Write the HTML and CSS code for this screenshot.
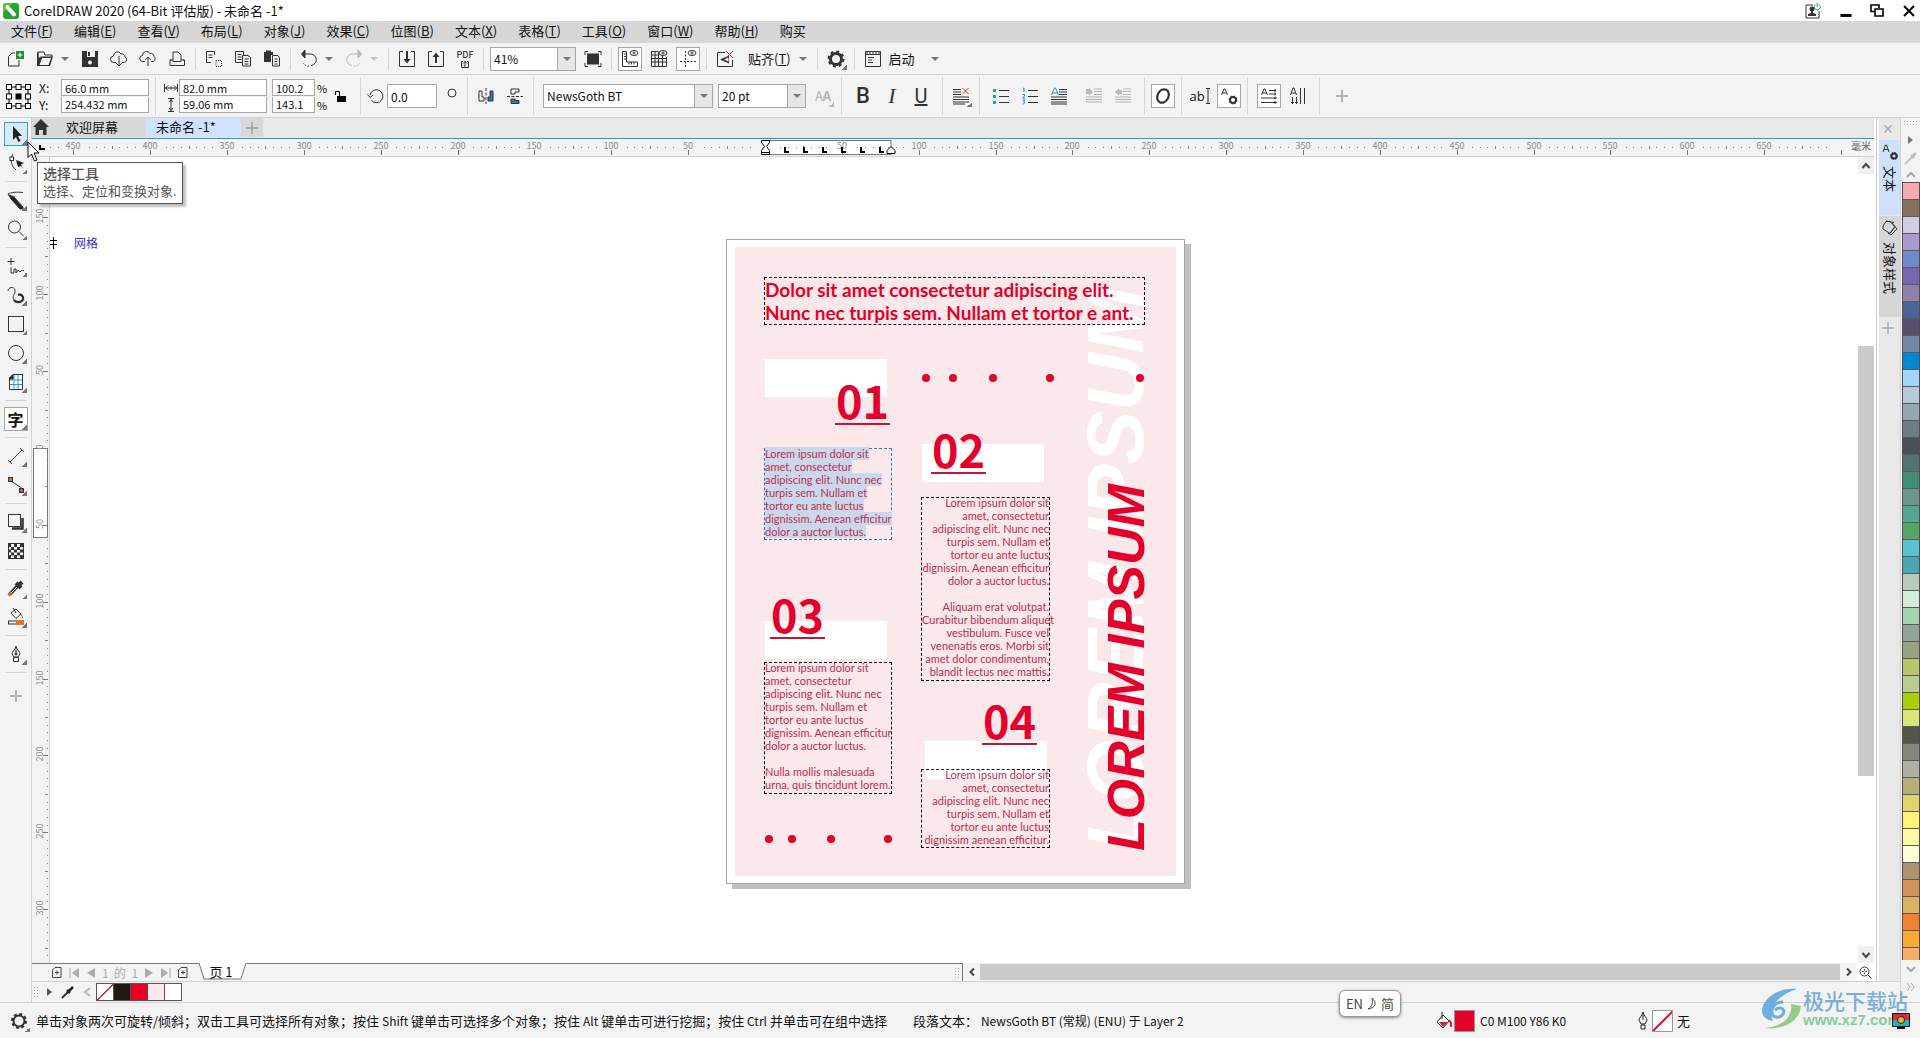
FILE: index.html
```html
<!DOCTYPE html>
<html lang="zh-CN">
<head>
<meta charset="utf-8">
<title>CorelDRAW 2020 (64-Bit 评估版) - 未命名 -1*</title>
<link rel="stylesheet" href="styles.css">
</head>
<body>
<header class="titlebar">
  <svg class="app-logo" width="16" height="16" viewBox="0 0 16 16"><rect width="16" height="16" rx="3" fill="#24a52c"/><path d="M0 10V3a3 3 0 0 1 3-3h7z" fill="#56c235"/><path d="M3 2.500l2-.5 8 8.500-.5 2.500-2.500.500-7.500-8.500z" fill="#fff"/></svg>
  <h1 class="app-title">CorelDRAW 2020 (64-Bit 评估版) - 未命名 -1*</h1>
  <div class="window-controls">
    <button class="win" aria-label="登录"><svg width="18" height="18" viewBox="0 0 18 18"><path d="M9 3H2v13h13V9" stroke="#333" fill="none"/><circle cx="8" cy="7" r="2.500" fill="#333"/><path d="M7 8h2v3l3 1v2H4v-2l3-1z" fill="#333"/><path d="M11.500 2.500a3 3 0 1 0 3.500 0M13.200 1v4" stroke="#2a9d4e" fill="none"/></svg></button>
    <button class="win" aria-label="最小化"><svg width="12" height="16" viewBox="0 0 12 16"><path d="M.5 12.500h11" stroke="#000" stroke-width="3"/></svg></button>
    <button class="win" aria-label="还原"><svg width="14" height="16" viewBox="0 0 14 16"><path d="M4.500 8.500H1V2h8v3M5 6h8v7H5z" fill="none" stroke="#000" stroke-width="1.600"/></svg></button>
    <button class="win" aria-label="关闭"><svg width="14" height="16" viewBox="0 0 14 16"><path d="M2 3l10 10M12 3L2 13" stroke="#000" stroke-width="2"/></svg></button>
  </div>
</header>

<nav class="menubar">
  <button>文件(<u>F</u>)</button><button>编辑(<u>E</u>)</button><button>查看(<u>V</u>)</button><button>布局(<u>L</u>)</button><button>对象(<u>J</u>)</button><button>效果(<u>C</u>)</button><button>位图(<u>B</u>)</button><button>文本(<u>X</u>)</button><button>表格(<u>T</u>)</button><button>工具(<u>O</u>)</button><button>窗口(<u>W</u>)</button><button>帮助(<u>H</u>)</button><button>购买</button>
</nav>

<div class="bar standard-bar">
  <button class="tool" aria-label="新建"><svg viewBox="0 0 24 24"><path d="M11 6H8L4.500 9.500V19H15v-6"/><rect x="12" y="4" width="8" height="8" fill="#1f8a3b" stroke="none"/><path d="M16 5.500v5M13.500 8h5" stroke="#fff"/></svg></button>
  <span class="split"><button class="tool" aria-label="打开"><svg viewBox="0 0 24 24"><path d="M5 18V5h6l1 3h7v2"/><path d="M4 19V5.500h1.500V11L8 9.500h12L17 19z" fill="#333" stroke="none"/><path d="M9 11h9l-2.500 7H6.500z" fill="#f3f3f3" stroke="none"/></svg></button><button class="drop" aria-label="最近文件"></button></span>
  <button class="tool" aria-label="保存"><svg viewBox="0 0 24 24"><path d="M4 4h16v16H4V6z" fill="#333" stroke="none"/><path d="M9 4h8v6H9z" fill="#f3f3f3" stroke="none"/><path d="M11 5v4" stroke-width="2"/><circle cx="12" cy="15.500" r="2" fill="#f3f3f3" stroke="none"/></svg></button>
  <button class="tool" aria-label="从云中打开"><svg viewBox="0 0 24 24"><path d="M9 15.500H7a3 3 0 0 1-.5-6.500 4 4 0 0 1 7.500-2 3 3 0 0 1 4 3 3 3 0 0 1-.5 5.500H15M12 9v9M9 16l3 3 3-3"/></svg></button>
  <button class="tool" aria-label="保存到云"><svg viewBox="0 0 24 24"><path d="M9 14.500H7a3 3 0 0 1-.5-6 4 4 0 0 1 7.500-2 3 3 0 0 1 4 3 3 3 0 0 1-.5 5H15M12 19v-8M9 13l3-3 3 3"/></svg></button>
  <button class="tool" aria-label="打印"><svg viewBox="0 0 24 24"><path d="M8 13V5h5l3 3v5M6.500 13H5v5.500h14.500V13H18M5 13h3v1.500h8V13h3"/></svg></button>
  <i class="sep"></i>
  <button class="tool" aria-label="剪切"><svg viewBox="0 0 24 24"><path d="M12.500 8V4.500H4.500v11H9M6.500 8h4M6.500 10.500h4"/><path d="M14 13.500h5.500v6H14z" stroke-dasharray="1 1"/></svg></button>
  <button class="tool" aria-label="复制"><svg viewBox="0 0 24 24"><path d="M11 15.500H4.500v-11h8V8M6.500 7.500h4M6.500 10h4M6.500 12.500h4M11.500 8.500H17l2.500 2v8.500h-8zM13.500 12h4M13.500 14.500h4M13.500 17h4"/></svg></button>
  <button class="tool" aria-label="粘贴"><svg viewBox="0 0 24 24"><path d="M4 5h2V3.500h5V5h2v3h-2v7H4z" fill="#333" stroke="none"/><path d="M12.500 8.500H18l1.500 2v8.500h-7zM14.500 12h3M14.500 14.500h3M14.500 17h3"/></svg></button>
  <i class="sep"></i>
  <span class="split"><button class="tool" aria-label="撤消"><svg viewBox="0 0 24 24"><path d="M7 7h6a5.500 5.500 0 0 1 1 11.500"/><path d="M12 19a6 6 0 0 1-6-3" stroke-dasharray="1.500 1.500"/><path d="M8 3L4.500 7 8 11z" fill="#333"/></svg></button><button class="drop" aria-label="撤消列表"></button></span>
  <span class="split"><button class="tool dim" aria-label="重做"><svg viewBox="0 0 24 24"><path d="M17 7h-6a5.500 5.500 0 0 0-1 11.500"/><path d="M12 19a6 6 0 0 0 6-3" stroke-dasharray="1.500 1.500"/><path d="M16 3l3.500 4-3.500 4z" fill="#bbb"/></svg></button><button class="drop dim" aria-label="重做列表"></button></span>
  <i class="sep"></i>
  <button class="tool" aria-label="导入"><svg viewBox="0 0 24 24"><path d="M8 4.500H4.500v15h15v-15H16"/><path d="M12 4v10" stroke-width="2"/><path d="M8.500 12l3.500 4.500 3.500-4.500z" fill="#333" stroke="none"/></svg></button>
  <button class="tool" aria-label="导出"><svg viewBox="0 0 24 24"><path d="M8 4.500H4.500v15h15v-15H16"/><path d="M12 16V8" stroke-width="2"/><path d="M8.500 10L12 5.500l3.500 4.500z" fill="#333" stroke="none"/></svg></button>
  <button class="tool pdf" aria-label="发布为 PDF"><span>PDF</span><svg width="8" height="8" viewBox="0 0 8 8"><path d="M2 1.500H.5v6h7v-6H6M4 7V1M2 3.500l2-2 2 2"/></svg></button>
  <i class="sep"></i>
  <span class="combo zoom-combo"><select aria-label="缩放级别"><option>41%</option></select></span>
  <button class="tool" aria-label="全屏预览"><svg viewBox="0 0 24 24"><rect x="6.500" y="7" width="11" height="10" fill="#333"/><path d="M4 8V4.500h3M17 4.500h3V8M20 16v3.500h-3M7 19.500H4V16"/></svg></button>
  <i class="sep"></i>
  <button class="tool on" aria-label="显示标尺"><svg viewBox="0 0 24 24"><path d="M4.500 4.500h4V15h11v4.500h-15zM6 7h2.500M6 9.500h2.500M6 12h2.500M11 15v2.500M13.500 15v2.500M16 15v2.500"/><ellipse cx="16" cy="6" rx="4" ry="2.500"/><circle cx="16" cy="6" r="1"/></svg></button>
  <button class="tool" aria-label="显示网格"><svg viewBox="0 0 24 24"><path d="M11 4.500H4.500v15h15V10M4.500 8H12M4.500 11.500h15M4.500 15h15M8 4.500v15M11.500 4.500v15M15.500 9v10.500"/><ellipse cx="16" cy="6" rx="4" ry="2.500"/><circle cx="16" cy="6" r="1"/></svg></button>
  <button class="tool on" aria-label="显示辅助线"><svg viewBox="0 0 24 24"><path d="M4 14.500h16M9.500 4v16" stroke-dasharray="2 1.500"/><ellipse cx="16" cy="6" rx="4" ry="2.500"/><circle cx="16" cy="6" r="1"/></svg></button>
  <i class="sep"></i>
  <button class="tool" aria-label="贴齐关闭"><svg viewBox="0 0 24 24"><path d="M12 5.500H4.500v14h15V13"/><path d="M16 8.500v8L7 12.500z" fill="#333" stroke="none"/><path d="M15.500 10.500v4L11 12.500z" fill="#f3f3f3" stroke="none"/><path d="M13 4l7 7M20 4l-7 7" stroke="#e0343c"/></svg></button>
  <span class="split"><button class="word">贴齐(<u>T</u>)</button><button class="drop wide" aria-label="贴齐选项"></button></span>
  <i class="sep"></i>
  <button class="tool fly" aria-label="选项"><svg viewBox="0 0 24 24"><circle cx="12" cy="12" r="5.500" stroke-width="3"/><circle cx="12" cy="12" r="7.500" stroke-width="2" stroke-dasharray="3 2.890"/></svg></button>
  <i class="sep"></i>
  <button class="tool" aria-label="应用程序启动器"><svg viewBox="0 0 24 24"><path d="M4.500 4.500h15v15h-15zM4.500 7.500h15M7 10.500h6M7 13h4M7 15.500h5"/><path d="M5 6h14" stroke-dasharray="2 1"/></svg></button>
  <span class="split"><button class="word launch">启动</button><button class="drop wider" aria-label="启动列表"></button></span>
</div>

<div class="bar property-bar">
  <svg class="origin" width="25" height="25" viewBox="0 0 25 25"><path d="M3 3h19v19H3z" fill="none" stroke="#000"/><g fill="#fff" stroke="#000"><rect x=".5" y=".5" width="5" height="5"/><rect x="10" y=".5" width="5" height="5"/><rect x="19.500" y=".5" width="5" height="5"/><rect x=".5" y="10" width="5" height="5"/><rect x="19.500" y="10" width="5" height="5"/><rect x=".5" y="19.500" width="5" height="5"/><rect x="10" y="19.500" width="5" height="5"/><rect x="19.500" y="19.500" width="5" height="5"/></g><rect x="9.500" y="9.500" width="6" height="6"/></svg>
  <div class="pair position">
    <label for="pos-x">X:</label><input id="pos-x" value="66.0 mm">
    <label for="pos-y">Y:</label><input id="pos-y" value="254.432 mm">
  </div>
  <i class="sep"></i>
  <div class="pair size">
    <label for="size-w" aria-label="宽度"><svg width="14" height="8" viewBox="0 0 14 8"><path d="M.5 0v8M13.500 0v8M1 4h12M4 1.500L1.500 4 4 6.500M10 1.500L12.500 4 10 6.500M7 2.500v3"/></svg></label><input id="size-w" value="82.0 mm">
    <label for="size-h" aria-label="高度"><svg width="8" height="14" viewBox="0 0 8 14"><path d="M1 .5h6M1 13.500h6M4 1v12M2 4l2-2.500L6 4M2 10l2 2.500L6 10"/></svg></label><input id="size-h" value="59.06 mm">
  </div>
  <div class="pair scale">
    <input id="scale-x" value="100.2"><label for="scale-x">%</label>
    <input id="scale-y" value="143.1"><label for="scale-y">%</label>
  </div>
  <button class="tool lock" aria-label="锁定比率"><svg viewBox="0 0 24 24"><path d="M5.500 11V7.500h4V12" stroke="#000"/><rect x="7" y="12" width="9" height="6" fill="#000" stroke="none"/></svg></button>
  <i class="sep"></i>
  <div class="rotate">
    <label for="angle" aria-label="旋转角度"><svg width="18" height="18" viewBox="0 0 18 18"><path d="M4.500 13.500A6.500 6.500 0 1 0 3 8M.5 7.500l2.500 3 3-2.500"/></svg></label>
    <input id="angle" value="0.0"><svg class="degree" width="12" height="12" viewBox="0 0 12 12"><circle cx="6" cy="6" r="4"/></svg>
  </div>
  <i class="sep"></i>
  <button class="tool" aria-label="水平镜像"><svg viewBox="0 0 24 24"><path d="M5 7h3v6h2v4H5z"/><path d="M12 4v16" stroke-dasharray="3 1.500"/><path d="M19 7h-3v6h-2v4h5z" fill="#2f7d9b"/></svg></button>
  <button class="tool" aria-label="垂直镜像"><svg viewBox="0 0 24 24"><path d="M16 5v3h-4v2H8V5z"/><path d="M4 12.500h16" stroke-dasharray="3 1.500"/><path d="M16 19.500v-3h-4V15H8v4.500z" fill="#2f7d9b"/></svg></button>
  <i class="sep"></i>
  <span class="combo font-combo"><select aria-label="字体"><option>NewsGoth BT</option></select></span>
  <span class="combo size-combo"><select aria-label="字体大小"><option>20 pt</option></select></span>
  <button class="tool dim fly case" aria-label="调整大小写"><span>A<b>A</b></span></button>
  <i class="sep"></i>
  <span class="group"><button class="tool glyph bold" aria-label="粗体">B</button><button class="tool glyph italic" aria-label="斜体">I</button><button class="tool glyph under" aria-label="下划线">U</button></span>
  <i class="sep"></i>
  <button class="tool fly" aria-label="文本对齐"><svg viewBox="0 0 24 24"><path d="M4 5.500h8M4 8h8M4 10.500h8M4 13h16M4 15.500h16M4 18h16M4 20h12"/><path d="M13.500 4l6 6M19.500 4l-6 6" stroke="#e0343c"/></svg></button>
  <i class="sep"></i>
  <span class="group"><button class="tool" aria-label="项目符号列表"><svg viewBox="0 0 24 24"><path d="M10 6.500h10M10 12.500h10M10 18.500h10"/><path d="M4 5h3v3H4zM4 11h3v3H4zM4 17h3v3H4z" fill="#1d9ab8" stroke="none"/></svg></button><button class="tool" aria-label="编号列表"><svg viewBox="0 0 24 24"><path d="M10 6.500h10M10 12.500h10M10 18.500h10"/><path d="M5 4.500l1-.5v4M4.500 10.500h2v1.500l-2 2h3M4.500 16h2.500l-1.500 2c2 0 1.500 2-1 2" stroke="#2288b8"/></svg></button><button class="tool" aria-label="首字下沉"><svg viewBox="0 0 24 24"><path d="M12 5.500h8M12 8h8M12 10.500h8M4 13h16M4 15.500h16M4 18h16M4 20h16"/><path d="M4.500 11L7.500 4h1l3 7M5.500 9h5" stroke="#2a93c8"/></svg></button></span>
  <span class="group tight"><button class="tool dim" aria-label="减少缩进量"><svg viewBox="0 0 24 24"><path d="M12 5h8M12 7.500h8M12 10.500h8M4 13h16M4 15.500h16M4 18h16"/><path d="M4 5h3V3.500L11 8l-4 4v-2H4z" fill="#bbb" stroke="none"/></svg></button><button class="tool dim" aria-label="增加缩进量"><svg viewBox="0 0 24 24"><path d="M12 5h8M12 7.500h8M12 10.500h8M4 13h16M4 15.500h16M4 18h16"/><path d="M11 6H8V4L4 8l4 4v-2h3z" fill="#bbb" stroke="none"/></svg></button></span>
  <i class="sep"></i>
  <button class="tool on" aria-label="交互式 OpenType"><svg viewBox="0 0 24 24"><ellipse cx="12" cy="12" rx="5.500" ry="7" transform="rotate(28 12 12)" stroke-width="2.200"/></svg></button>
  <i class="sep"></i>
  <button class="tool abtext" aria-label="编辑文本"><span>ab</span><svg width="6" height="18" viewBox="0 0 6 18"><path d="M1 1.500h4M1 16.500h4M3 1.500v15"/></svg></button>
  <button class="tool on" aria-label="文本属性"><svg viewBox="0 0 24 24"><path d="M4.500 11L7 5h1l2.500 6M5.500 9h4"/><circle cx="16" cy="16" r="3" stroke-width="2"/><circle cx="16" cy="16" r="4" stroke-dasharray="1.500 1.640"/></svg></button>
  <i class="sep"></i>
  <span class="group"><button class="tool on" aria-label="水平文本"><svg viewBox="0 0 24 24"><path d="M4.500 11L7 5h1l2.500 6M5.500 9h4M12 6.500h7M12 10h7M4 14h16M4 18.500h16M18 5v3M18 8.500v3M18 12.500v3M18 17v3"/></svg></button><button class="tool" aria-label="垂直文本"><svg viewBox="0 0 24 24"><path d="M4.500 11L7 4h1l2.500 7M5.500 9h4M14.500 4v16M18.500 4v16M6.500 13v7M10.500 13v7M5 18.500h3M9 18.500h3"/></svg></button></span>
  <i class="sep"></i>
  <span class="group"><button class="tool dim" aria-label="快速自定义"><svg viewBox="0 0 24 24"><path d="M13 6v12M7 12h12" stroke-width="2"/></svg></button></span>
</div>

<main class="workspace">
  <aside class="toolbox">
    <button class="tool fly active" aria-label="选择工具"><svg viewBox="0 0 24 24"><path d="M9 4v14l3-3 2.500 5 2-1-2.500-5h4z" fill="#222" stroke="none"/></svg></button>
    <button class="tool fly" aria-label="形状工具"><svg viewBox="0 0 24 24"><path d="M9 3c-3 5-2 12 3 16"/><rect x="6" y="6" width="3.500" height="3.500" fill="#fff"/><path d="M12 9l8 3-3 1.500L19 18l-2-3-3 1z" fill="#222" stroke="none"/></svg></button>
    <i class="sep"></i>
    <button class="tool fly" aria-label="裁剪工具"><svg viewBox="0 0 24 24"><path d="M4 6c3-2 9-2 15-1.500M4 6c1 3 4 4 7 3"/><path d="M5 7l5 2 9 10v2h-3L7 11z" fill="#222"/></svg></button>
    <button class="tool fly" aria-label="缩放工具"><svg viewBox="0 0 24 24"><circle cx="10.500" cy="10" r="6"/><path d="M15 14.500l5 5"/></svg></button>
    <i class="sep"></i>
    <button class="tool fly" aria-label="手绘工具"><svg viewBox="0 0 24 24"><path d="M7 4v7M3.500 7.500h7M7 13v6h3v-4h2v4l2-3 2 2 2-2 2 1"/></svg></button>
    <button class="tool fly" aria-label="艺术笔工具"><svg viewBox="0 0 24 24"><path d="M4 8c0-4 6-5 7-1s-4 7-1 10"/><path d="M10 17c3 4 10 2 9-3-1-2-3-3-5-2" stroke-width="2.200"/></svg></button>
    <button class="tool fly" aria-label="矩形工具"><svg viewBox="0 0 24 24"><rect x="4.500" y="4.500" width="15" height="15"/></svg></button>
    <button class="tool fly" aria-label="椭圆形工具"><svg viewBox="0 0 24 24"><circle cx="12" cy="12" r="7.500"/></svg></button>
    <button class="tool fly" aria-label="表格工具"><svg viewBox="0 0 24 24"><path d="M9 4.500h9.500v15h-13V8z" fill="#fff"/><path d="M6 10h12M6 14.500h12M10 5v14M14 5v14" stroke="#1e9fd0"/><path d="M5.500 9V8L9 4.500V9z" fill="#222"/></svg></button>
    <i class="sep"></i>
    <button class="tool fly on text-tool" aria-label="文本工具">字</button>
    <i class="sep"></i>
    <button class="tool fly" aria-label="平行度量工具"><svg viewBox="0 0 24 24"><path d="M6 18L18 6M4 16l4 4M16 4l4 4"/></svg></button>
    <button class="tool fly" aria-label="连接器工具"><svg viewBox="0 0 24 24"><path d="M7 8l12 8"/><rect x="4.500" y="4.500" width="4" height="4" fill="#c87a3a"/><rect x="15.500" y="15.500" width="4" height="4" fill="#b85a3a"/></svg></button>
    <i class="sep"></i>
    <button class="tool fly" aria-label="阴影工具"><svg viewBox="0 0 24 24"><rect x="4.500" y="4.500" width="12" height="12"/><path d="M18.500 8v10.500H8" stroke-width="2.500"/></svg></button>
    <button class="tool" aria-label="透明度工具"><svg viewBox="0 0 24 24"><rect x="4.500" y="4.500" width="15" height="15"/><path d="M4 6.500h16M4 12h16M4 17.500h16" stroke-width="3" stroke-dasharray="3 3"/><path d="M7 9.500h13M7 15h13" stroke-width="3" stroke-dasharray="3 3"/></svg></button>
    <i class="sep"></i>
    <button class="tool fly" aria-label="颜色滴管工具"><svg viewBox="0 0 24 24"><path d="M5.500 18.500L14 9.500" stroke-width="3.500"/><path d="M6 18l7.500-7.500" stroke="#fff"/><path d="M4.500 19.500l3-3" stroke="#d2691e" stroke-width="3"/><path d="M12 7l5 5M15 9l3-3" stroke-width="4"/></svg></button>
    <button class="tool fly" aria-label="交互式填充工具"><svg viewBox="0 0 24 24"><path d="M7 8l5-4 5 5-5 4.500zM9 3l3 5"/><path d="M17 9l2 4" stroke="#d2691e"/><rect x="4.500" y="16" width="15" height="3"/><path d="M12 15.500h8v4h-8z" fill="#e8721c" stroke="none"/></svg></button>
    <i class="sep"></i>
    <button class="tool fly" aria-label="轮廓笔"><svg viewBox="0 0 24 24"><path d="M12 4c-1 4-4 6-4 8l2 3h4l2-3c0-2-3-4-4-8zM12 6v6M9.500 15.500h5v4h-5z"/><circle cx="12" cy="12" r="1" fill="#222"/></svg></button>
    <i class="sep"></i>
    <button class="tool dim last" aria-label="快速自定义工具箱"><svg viewBox="0 0 24 24"><path d="M12 6v12M6 12h12" stroke-width="2"/></svg></button>
  </aside>

  <div class="center">
    <div class="editor-row">
      <section class="editor">
        <div class="tabs">
          <button class="tab welcome"><svg width="16" height="16" viewBox="0 0 16 16"><path d="M8 0l8 8h-2.500v8H10v-5H6v5H2.500V8H0z" fill="#333"/></svg><span>欢迎屏幕</span></button>
          <button class="tab current">未命名 -1*</button>
          <button class="tab add" aria-label="新建文档"><svg width="12" height="12" viewBox="0 0 12 12"><path d="M6 0v12M0 6h12" stroke="#aaa" stroke-width="2"/></svg></button>
        </div>
        <div class="ruler-row">
          <svg id="ruler-top" class="ruler-top" aria-hidden="true"></svg>
          <span class="unit">毫米</span>
        </div>
        <div class="stage-row">
          <svg id="ruler-left" class="ruler-left" aria-hidden="true"></svg>
          <div class="canvas">
            <svg class="snap-mark" width="8" height="12" viewBox="0 0 8 12"><path d="M3.500 0v12M0 3.500h7M0 7.500h7" stroke="#000"/></svg>
            <span class="grid-label">网格</span>
            <article class="page">
              <div class="sheet">
                <p class="poster ghost">LOREM IPSUM</p>
                <h2 class="frame headline">Dolor sit amet consectetur adipiscing elit.<br>Nunc nec turpis sem. Nullam et tortor e ant.</h2>
                <div class="block b1"></div><div class="block b2"></div><div class="block b3"></div><div class="block b4"></div>
                <svg class="dots dots-top" width="222" height="8" viewBox="0 0 222 8"><circle cx="4" cy="4" r="4"/><circle cx="31" cy="4" r="4"/><circle cx="71" cy="4" r="4"/><circle cx="128" cy="4" r="4"/><circle cx="218" cy="4" r="4"/></svg>
                <svg class="dots dots-bottom" width="128" height="8" viewBox="0 0 128 8"><circle cx="4" cy="4" r="4"/><circle cx="27" cy="4" r="4"/><circle cx="66" cy="4" r="4"/><circle cx="123" cy="4" r="4"/></svg>
                <div class="num n1">01</div><div class="num n2">02</div><div class="num n3">03</div><div class="num n4">04</div>
                <div class="frame copy f1"><p><mark>Lorem ipsum dolor sit<br>amet, consectetur<br>adipiscing elit. Nunc nec<br>turpis sem. Nullam et<br>tortor eu ante luctus<br>dignissim. Aenean efficitur<br>dolor a auctor luctus.</mark></p></div>
                <div class="frame copy right f2"><p>Lorem ipsum dolor sit<br>amet, consectetur<br>adipiscing elit. Nunc nec<br>turpis sem. Nullam et<br>tortor eu ante luctus<br>dignissim. Aenean efficitur<br>dolor a auctor luctus.</p><p>Aliquam erat volutpat.<br>Curabitur bibendum aliquet<br>vestibulum. Fusce vel<br>venenatis eros. Morbi sit<br>amet dolor condimentum,<br>blandit lectus nec mattis.</p></div>
                <div class="frame copy f3"><p>Lorem ipsum dolor sit<br>amet, consectetur<br>adipiscing elit. Nunc nec<br>turpis sem. Nullam et<br>tortor eu ante luctus<br>dignissim. Aenean efficitur<br>dolor a auctor luctus.</p><p>Nulla mollis malesuada<br>urna, quis tincidunt lorem.</p></div>
                <div class="frame copy right f4"><p>Lorem ipsum dolor sit<br>amet, consectetur<br>adipiscing elit. Nunc nec<br>turpis sem. Nullam et<br>tortor eu ante luctus<br>dignissim aenean efficitur.</p></div>
                <p class="poster solid">LOREM IPSUM</p>
              </div>
            </article>
          </div>
          <div class="vscroll">
            <button aria-label="向上滚动"><svg width="10" height="8" viewBox="0 0 10 8"><path d="M1.500 6L5 2l3.500 4"/></svg></button>
            <div class="track"><div class="thumb"></div></div>
            <button aria-label="向下滚动"><svg width="10" height="8" viewBox="0 0 10 8"><path d="M1.500 2L5 6l3.500-4"/></svg></button>
          </div>
        </div>
        <div class="bottom-row">
          <div class="navigator">
            <button aria-label="在前面添加页"><svg width="10" height="11" viewBox="0 0 10 11"><path d="M3 .5h6v10H.5V3zM5 3.500v4M3 5.500h4" stroke="#444"/></svg></button>
            <button aria-label="首页"><svg width="11" height="10" viewBox="0 0 11 10"><path d="M1 0v10" stroke="#aaa"/><path d="M10 0v10L3 5z" fill="#aaa"/></svg></button>
            <button aria-label="上一页"><svg width="8" height="10" viewBox="0 0 8 10"><path d="M8 0v10L0 5z" fill="#aaa"/></svg></button>
            <span class="count">1&nbsp; 的&nbsp; 1</span>
            <button aria-label="下一页"><svg width="8" height="10" viewBox="0 0 8 10"><path d="M0 0v10l8-5z" fill="#aaa"/></svg></button>
            <button aria-label="末页"><svg width="11" height="10" viewBox="0 0 11 10"><path d="M10 0v10" stroke="#aaa"/><path d="M1 0v10l7-5z" fill="#aaa"/></svg></button>
            <button aria-label="在后面添加页"><svg width="10" height="11" viewBox="0 0 10 11"><path d="M3 .5h6v10H.5V3zM5 3.500v4M3 5.500h4" stroke="#444"/></svg></button>
          </div>
          <button class="page-tab"><svg width="48" height="17" viewBox="0 0 48 17"><path d="M0 0l5 16h37l5-16" fill="#fff" stroke="#777"/></svg><span>页 1</span></button>
          <div class="nav-fill"><i class="grip"></i></div>
          <div class="hscroll">
            <button aria-label="向左滚动"><svg width="8" height="10" viewBox="0 0 8 10"><path d="M6 1.500L2.500 5 6 8.500"/></svg></button>
            <div class="hthumb"></div>
            <button aria-label="向右滚动"><svg width="8" height="10" viewBox="0 0 8 10"><path d="M2 1.500L5.500 5 2 8.500"/></svg></button>
          </div>
          <button class="navigator-button" aria-label="导航器"><svg width="13" height="13" viewBox="0 0 13 13"><circle cx="5.500" cy="5.500" r="4.500" fill="none" stroke="#333"/><path d="M9 9l3.500 3.500M5.500 3v1.500M5.500 6.500V8M3 5.500h1.500M6.500 5.500H8" stroke="#333"/></svg></button>
        </div>
      </section>
      <aside class="docker">
        <button class="close" aria-label="关闭泊坞窗"><svg width="8" height="8" viewBox="0 0 8 8"><path d="M.5.500l7 7M7.500.500l-7 7" stroke="#aaa" stroke-width="1.500"/></svg></button>
        <button class="docker-tab selected"><svg width="16" height="16" viewBox="0 0 16 16"><path d="M1 8l2.500-7h1L7 8M2 5.500h4" fill="none" stroke="#333"/><circle cx="12" cy="12" r="2.500" fill="none" stroke="#333" stroke-width="2"/><circle cx="12" cy="12" r="3.500" fill="none" stroke="#333" stroke-dasharray="1.500 1.250"/></svg><span>文本</span></button>
        <button class="docker-tab"><svg width="16" height="16" viewBox="0 0 16 16"><path d="M1 6L4 1.500h4l5 5-5 7L1 9zM4 1l8 1.500M10 3l5 6-6 6-3-2M13 7L8 13" fill="none" stroke="#333"/></svg><span>对象样式</span></button>
        <button class="close plus" aria-label="添加泊坞窗"><svg width="12" height="12" viewBox="0 0 12 12"><path d="M6 0v12M0 6h12" stroke="#aaa" stroke-width="1.500"/></svg></button>
      </aside>
    </div>
    <div class="doc-palette">
      <i class="grip"></i>
      <button aria-label="调色板菜单"><svg width="5" height="8" viewBox="0 0 5 8"><path d="M0 0v8l5-4z" fill="#555"/></svg></button>
      <button aria-label="滴管"><svg width="13" height="13" viewBox="0 0 13 13"><path d="M1 12l7-7" stroke="#333" stroke-width="2"/><path d="M6 4l3 3M8 5l4-4" stroke="#222" stroke-width="2.500"/></svg></button>
      <button aria-label="向前"><svg width="8" height="10" viewBox="0 0 8 10"><path d="M7 1L2 5l5 4" fill="none" stroke="#bbb" stroke-width="2"/></svg></button>
      <div class="doc-colors"><button class="none" aria-label="无"></button><button class="ink" aria-label="黑"></button><button class="crimson" aria-label="红"></button><button class="blush" aria-label="粉"></button><button class="white" aria-label="白"></button></div>
    </div>
  </div>

  <aside class="palette">
    <i class="grip"></i>
    <button aria-label="调色板菜单"><svg width="5" height="8" viewBox="0 0 5 8"><path d="M0 0v8l5-4z" fill="#777"/></svg></button>
    <button aria-label="滴管"><svg width="13" height="13" viewBox="0 0 13 13"><path d="M1 12l8-8" stroke="#c4c4c4" stroke-width="2"/><path d="M7 3l3 3M9 4l3-3" stroke="#bbb" stroke-width="2.500"/></svg></button>
    <button aria-label="向上"><svg width="10" height="7" viewBox="0 0 10 7"><path d="M1 6l4-4 4 4" fill="none" stroke="#aaa" stroke-width="2"/></svg></button>
    <div id="swatches" class="swatches"></div>
    <button aria-label="向下"><svg width="10" height="7" viewBox="0 0 10 7"><path d="M1 1l4 4 4-4" fill="none" stroke="#aaa" stroke-width="2"/></svg></button>
    <button class="more" aria-label="展开"><svg width="9" height="8" viewBox="0 0 9 8"><path d="M1 0l3 4-3 4M5 0l3 4-3 4" fill="none" stroke="#aaa"/></svg></button>
  </aside>
</main>

<footer class="status">
  <button class="tool fly" aria-label="状态栏选项"><svg viewBox="0 0 24 24"><circle cx="12" cy="12" r="5.500" stroke-width="2"/><circle cx="12" cy="12" r="7" stroke-width="2" stroke-dasharray="3 2.500"/></svg></button>
  <p class="hint">单击对象两次可旋转/倾斜；双击工具可选择所有对象；按住 <small>Shift</small> 键单击可选择多个对象；按住 <small>Alt</small> 键单击可进行挖掘；按住 <small>Ctrl</small> 并单击可在组中选择</p>
  <p class="object-info">段落文本：&nbsp;<small>NewsGoth BT (常规) (ENU) 于 Layer 2</small></p>
  <div class="fill-info"><svg width="18" height="20" viewBox="0 0 18 20"><path d="M2 11l6-7 6 6-6 7zM7 1v7" fill="#fff" stroke="#222"/><path d="M4 11h9l-5 5z" fill="#d8202c"/><path d="M14 9l2 3v4" stroke="#d8202c" stroke-width="2" fill="none"/></svg><i class="chip red"></i><small>C0 M100 Y86 K0</small></div>
  <div class="outline-info"><svg width="10" height="20" viewBox="0 0 10 20"><path d="M5 1C4 5 1 7 1 9l2 4h4l2-4C9 7 6 5 5 1zM5 3v6M3 14h4v4H3z" fill="none" stroke="#222"/></svg><i class="chip nofill"></i><span>无</span></div>
  <svg class="proof" width="18" height="16" viewBox="0 0 18 16"><path d="M.5.500h17v13H.5z" fill="#e02a35" stroke="#111"/><path d="M1 7h16v6H1z" fill="#19b5c8"/><circle cx="9" cy="7" r="3.500" fill="#f0b429" stroke="#222"/><path d="M5 15h8" stroke="#111" stroke-width="2"/></svg>
</footer>

<div class="tooltip" role="tooltip"><strong>选择工具</strong><span>选择、定位和变换对象.</span></div>
<svg class="cursor" width="14" height="22" viewBox="0 0 14 22"><path d="M1 1v15.500l3.500-3.500 3 7 2.500-1-3-7h5z" fill="#fff" stroke="#000"/></svg>
<div class="ime"><span>EN</span><svg width="10" height="14" viewBox="0 0 10 14"><path d="M5 1c5 4 4 10-4 11 4-2 5-6 4-11z" fill="none" stroke="#444"/></svg><span>简</span></div>
<div class="watermark">
  <svg width="42" height="42" viewBox="0 0 42 42"><path d="M38 1C20-1 3 10 3 23c0 6 5 9 11 10C9 22 16 8 38 1z" fill="#4d9fdc"/><path d="M32 16c2 12-8 23-27 24 14 2 35-3 37-22z" fill="#7cc36a"/><path d="M24 14c-8 0-12 6-11 11s8 6 11 1-3-8-8-4" fill="none" stroke="#4d9fdc" stroke-width="3"/></svg>
  <div><strong>极光下载站</strong><span>www.xz7.com</span></div>
</div>
<script src="app.js"></script>
</body>
</html>
```
FILE: styles.css
```css
* { box-sizing: border-box; }
body {
  margin: 0;
  height: 100vh;
  display: flex;
  flex-direction: column;
  overflow: hidden;
  background: #f3f3f3;
  color: #111;
  font: 13px/16px "Noto Sans CJK SC", "Noto Sans", sans-serif;
}
button, input, select { font: inherit; color: inherit; }
button { border: 0; padding: 0; margin: 0; background: none; }
p, h1, h2 { margin: 0; font: inherit; }
small { font-size: 12px; }
svg { display: block; flex: none; }

/* Title and menus */
.titlebar { display: flex; align-items: center; height: 21px; background: #fff; padding-left: 3px; }
.app-title { margin-left: 5px; flex: 1; font-size: 13px; }
.window-controls { display: flex; gap: 18px; padding-right: 4px; }
.menubar { display: flex; align-items: center; gap: 21px; height: 22px; background: #d6d6d6; padding: 0 0 2px 11px; white-space: nowrap; }

/* Tool bars */
.bar { display: flex; align-items: center; gap: 5px; padding-left: 4px; border-bottom: 1px solid #d2d2d2; white-space: nowrap; }
.standard-bar { height: 32px; }
.property-bar { height: 43px; padding-left: 6px; }
.sep { flex: none; width: 1px; height: 22px; margin: 0 1px; background: #d4d4d4; }
.property-bar .sep { height: 38px; }
.split { display: flex; align-items: center; }
.group { display: flex; gap: 5px; margin: 0 3px; }
.tool { flex: none; width: 24px; height: 24px; display: flex; align-items: center; justify-content: center; border: 1px solid transparent; }
.tool > svg { fill: none; stroke: #333; }
.tool > svg[viewBox="0 0 24 24"] { width: 24px; height: 24px; }
.tool.dim > svg { stroke: #b4b4b4; }
.tool.on { background: #fff; border-color: #a6a6a6; }
.fly { background: linear-gradient(135deg, transparent 50%, #777 50%) right bottom / 5px 5px no-repeat; }
.fly.dim { background-image: linear-gradient(135deg, transparent 50%, #bbb 50%); }
.tool.fly.on { background: linear-gradient(135deg, transparent 50%, #777 50%) right bottom / 5px 5px no-repeat #fff; }
.fly.active { background-color: #d9ebfb; border-color: #2f9fe0; }
.drop { width: 16px; height: 24px; display: flex; align-items: center; justify-content: center; }
.drop::before { content: ""; border: 4px solid transparent; border-top-color: #777; border-bottom: 0; }
.drop.dim::before { border-top-color: #c4c4c4; }
.drop.wide { margin-left: 4px; }
.drop.wider { margin-left: 12px; }
.word { margin-left: 6px; }
.word.launch { margin-left: -1px; }
.pdf { flex-direction: column; font-size: 9px; line-height: 9px; gap: 1px; }

.combo { position: relative; display: flex; flex: none; height: 24px; }
.combo select { appearance: none; width: 100%; padding: 0 22px 0 3px; border: 1px solid #a6a6a6; border-radius: 0; background: #fff; font-size: 12px; }
.combo::after { content: ""; position: absolute; right: 1px; top: 1px; width: 17px; height: 22px; border-left: 1px solid #a6a6a6; background: #e6e6e6; pointer-events: none; }
.combo::before { content: ""; position: absolute; z-index: 1; right: 5px; top: 10px; border: 4px solid transparent; border-top-color: #777; border-bottom: 0; pointer-events: none; }
.zoom-combo { width: 86px; }
.font-combo { width: 170px; margin-left: 3px; }
.size-combo { width: 88px; }

.pair { display: grid; align-items: center; grid-auto-rows: 17px; font-size: 11px; }
.pair label { display: flex; justify-content: center; }
.pair label svg, .rotate svg { fill: none; stroke: #333; }
.pair input { width: 100%; height: 17px; padding: 0 3px; border: 1px solid #a6a6a6; background: #fff; }
.pair input:last-of-type { border-top: 0; height: 16px; }
.position { grid-template-columns: 25px 88px; }
.position label { justify-content: flex-start; padding-left: 3px; font-size: 12px; }
.size { grid-template-columns: 17px 88px; }
.scale { grid-template-columns: 43px 14px; }
.lock { margin-left: -4px; }
.rotate { display: flex; align-items: center; gap: 2px; }
.rotate input { width: 50px; height: 24px; border: 1px solid #a6a6a6; padding: 0 3px; font-size: 12px; background: #fff; }
.degree { margin: 0 3px 6px 7px; }
.case { color: #b4b4b4; font-size: 13px; }
.glyph { font: 22px/22px Roboto, "Open Sans", sans-serif; color: #333; }
.bold { font-weight: 500; }
.italic { font-family: "Liberation Serif", serif; font-style: italic; }
.under { text-decoration: underline; font-size: 20px; }
.abtext { font: 13px/16px "Open Sans", sans-serif; }

/* Workspace */
.workspace { flex: 1; min-height: 0; display: flex; }
.toolbox { flex: none; width: 32px; padding-top: 4px; display: flex; flex-direction: column; align-items: center; gap: 5px; border-right: 1px solid #d2d2d2; }
.toolbox .sep { width: 22px; height: 1px; margin: 1px 0; }
.last { margin-top: 5px; }
.text-tool { font-size: 16px; font-weight: 700; }
.center { flex: 1; min-width: 0; display: flex; flex-direction: column; }
.editor-row { flex: 1; min-height: 0; display: flex; }
.editor { flex: 1; min-width: 0; display: flex; flex-direction: column; }
.tabs { display: flex; height: 21px; background: #e8e8e8; border-bottom: 1px solid #2f97d0; }
.tab { height: 19px; }
.tab.welcome, .tab.current { padding-bottom: 2px; }
.welcome { display: flex; align-items: center; gap: 17px; width: 114px; padding-left: 1px; background: #d8d8d8; }
.current { width: 95px; padding-left: 10px; text-align: left; background: #cfe2ff; }
.add { width: 22px; display: flex; align-items: center; justify-content: center; background: #d8d8d8; }
.ruler-row { display: flex; height: 18px; border-bottom: 1px solid #d2d2d2; }
.ruler-top { flex: 1; min-width: 0; height: 17px; }
.ruler-top, .ruler-left { font-size: 9px; overflow: hidden; }
.ruler-top text, .ruler-left text { fill: #8a8a8a; text-anchor: middle; }
.unit { width: 32px; padding-left: 9px; margin-left: -32px; font-size: 10px; line-height: 14px; color: #666; white-space: nowrap; }
.stage-row { flex: 1; min-height: 0; display: flex; }
.ruler-left { width: 18px; height: 100%; border-right: 1px solid #d2d2d2; }
.canvas { position: relative; flex: 1; min-width: 0; overflow: hidden; background: #fff; }
.snap-mark { position: absolute; left: 0; top: 80px; }
.grid-label { position: absolute; left: 24px; top: 78px; font-size: 12px; color: #3a34d8; }
.vscroll { flex: none; width: 16px; display: flex; flex-direction: column; background: #fff; }
.vscroll button { height: 17px; display: flex; align-items: center; justify-content: center; background: #efefef; }
.vscroll svg, .hscroll svg { fill: none; stroke: #444; stroke-width: 2; }
.track { flex: 1; padding-top: 172px; }
.thumb { height: 72%; max-height: 430px; background: #cacaca; }
.bottom-row { flex: none; height: 18px; display: flex; }
.navigator { display: flex; align-items: center; gap: 7px; width: 167px; padding-left: 20px; border-top: 1px solid #777; color: #aaa; }
.navigator svg { fill: none; }
.count { font-size: 12px; white-space: nowrap; }
.page-tab { position: relative; width: 48px; padding-right: 4px; }
.page-tab svg { position: absolute; left: 0; top: 0; }
.page-tab span { position: relative; }
.nav-fill { flex: 1; max-width: 716px; display: flex; justify-content: flex-end; align-items: center; padding-right: 3px; border-top: 1px solid #777; border-right: 1px solid #777; }
.grip { width: 5px; height: 12px; background: radial-gradient(circle, #aaa 1px, transparent 1px) 0 0 / 3px 3px; }
.hscroll { flex: 1; display: flex; padding: 1px 0; }
.hscroll button { width: 17px; display: flex; align-items: center; justify-content: center; background: #f3f3f3; }
.hthumb { flex: 1; background: #cacaca; }
.navigator-button { width: 17px; display: flex; align-items: center; justify-content: center; background: #fff; }

/* Document page */
.page { position: absolute; left: 676px; top: 82px; width: 459px; height: 645px; padding: 7px 8px; background: #fff; border: 1px solid #a2a8a8; box-shadow: 6px 5px 0 #c0c0c0; }
.sheet { position: relative; height: 629px; background: #fbe8ea; color: #e4002b; white-space: nowrap; }
.frame { position: absolute; border: 1px dashed #111; }
.headline { left: 29px; top: 30px; width: 381px; height: 48px; font: 700 19px/23px Lato, "Open Sans", sans-serif; }
.block { position: absolute; width: 122px; height: 38px; background: #fff; }
.b1 { left: 30px; top: 112px; }
.b2 { left: 187px; top: 197px; }
.b3 { left: 30px; top: 374px; }
.b4 { left: 190px; top: 494px; }
.dots { position: absolute; fill: #e4002b; }
.dots-top { left: 187px; top: 127px; }
.dots-bottom { left: 30px; top: 588px; }
.num { position: absolute; width: 55px; height: 42px; border-bottom: 2px solid #c81238; text-align: center; font-size: 45px; line-height: 34px; font-weight: 700; }
.n1 { left: 100px; top: 136px; }
.n2 { left: 196px; top: 185px; }
.n3 { left: 35px; top: 350px; }
.n4 { left: 247px; top: 456px; }
.copy { width: 129px; font: 11px/13px Lato, "Liberation Sans", sans-serif; color: #c02c50; }
.copy p { position: relative; top: -2px; }
.copy p + p { margin-top: 13px; }
.copy mark { background: #c9d8ea; color: inherit; }
.right { text-align: right; }
.f1 { left: 29px; top: 201px; width: 128px; height: 92px; border-color: #2a82c8; }
.f2 { left: 186px; top: 250px; height: 184px; }
.f3 { left: 29px; top: 415px; width: 128px; height: 132px; }
.f4 { left: 186px; top: 522px; height: 79px; }
.poster { position: absolute; transform-origin: 0 0; transform: rotate(-90deg); font-family: "Liberation Sans", Arial, sans-serif; font-weight: 700; font-style: italic; }
.solid { left: 365px; top: 604px; font-size: 52px; line-height: 52px; }
.ghost { left: 341px; top: 604px; font-size: 80px; line-height: 80px; color: #fff; }

/* Dockers and palettes */
.docker { flex: none; width: 26px; padding-left: 3px; border-left: 2px solid #fff; background: linear-gradient(to right, #ccc 1px, #fff 1px 3px, #e8e8e8 3px); }
.docker button { display: flex; flex-direction: column; align-items: center; width: 100%; }
.docker .close { height: 22px; padding: 7px 3px 0 0; }
.docker-tab { height: 101px; padding-top: 4px; background: #d6d6d6; gap: 6px; }
.docker-tab.selected { height: 75px; margin-bottom: 1px; background: #cfe0fc; }
.docker-tab span { writing-mode: vertical-rl; text-orientation: sideways; }
.docker .plus { padding-top: 5px; }
.doc-palette { flex: none; height: 21px; display: flex; align-items: center; padding-left: 1px; border-top: 1px solid #d2d2d2; }
.doc-palette > button { margin-left: 9px; }
.doc-colors { display: flex; margin-left: 5px; border: 1px solid #555; }
.doc-colors button { width: 17px; height: 16px; border-right: 1px solid #555; }
.doc-colors button:last-child { border: 0; width: 16px; }
.none, .nofill { background: linear-gradient(135deg, transparent 48%, #d23 48% 54%, transparent 54%) #fff; }
.ink { background: #231815; }
.crimson, .red { background: #e60027; }
.blush { background: #fbe8ea; }
.white { background: #fff; }
.palette { flex: none; width: 20px; display: flex; flex-direction: column; align-items: center; border-left: 1px solid #d2d2d2; }
.palette .grip { width: 16px; height: 6px; margin: 2px 0 5px; }
.palette > button { flex: none; height: 18px; display: flex; align-items: center; justify-content: center; }
.palette > button:nth-child(4) { height: 15px; }
.swatches { flex: 1; min-height: 0; width: 18px; overflow: hidden; border: 1px solid #5a4a55; border-bottom: 0; }
.swatch { display: block; width: 100%; height: 17px; border-bottom: 1px solid #5a5a5a; }
.palette .more { height: 24px; padding-bottom: 6px; }

/* Status bar */
.status { flex: none; height: 36px; display: flex; align-items: center; border-top: 1px solid #d2d2d2; padding-left: 7px; white-space: nowrap; }
.hint { margin-left: 5px; width: 877px; }
.object-info { flex: 1; }
.fill-info, .outline-info { display: flex; align-items: center; width: 209px; }
.fill-info { margin-right: -6px; }
.outline-info { width: 254px; }
.chip { width: 21px; height: 22px; margin: 0 4px 0 1px; border: 1px solid #999; }
.fill-info .chip { margin-right: 5px; }
.outline-info svg + .chip { margin-left: 4px; }
.proof { position: relative; z-index: 2; margin-right: 10px; }

/* Overlays */
.tooltip { position: absolute; left: 37px; top: 162px; height: 42px; padding: 2px 5px; display: flex; flex-direction: column; border: 1px solid #555; background: #fff; box-shadow: 3px 3px 2px #8888; color: #555; white-space: nowrap; line-height: 17px; }
.tooltip strong { font-size: 14px; font-weight: 500; }
.cursor { position: absolute; left: 27px; top: 141px; }
.ime { position: absolute; right: 519px; bottom: 21px; width: 62px; height: 27px; display: flex; align-items: center; justify-content: center; gap: 4px; border: 1px solid #999; border-radius: 6px; background: #fff; box-shadow: 0 1px 3px #888; color: #444; }
.watermark { position: absolute; right: 12px; bottom: 8px; display: flex; gap: 2px; opacity: .8; white-space: nowrap; }
.watermark div { display: flex; flex-direction: column; }
.watermark strong { font-size: 21px; line-height: 24px; font-weight: 500; color: #5c9fd8; }
.watermark span { font: 700 15px/16px "Liberation Sans", Arial, sans-serif; color: #6fc487; }
```
FILE: app.js
```js
const NS = "http://www.w3.org/2000/svg";
const STEP = 76.85; // screen pixels per 50 mm

function add(svg, name, attrs, text) {
  const el = document.createElementNS(NS, name);
  for (const key in attrs) el.setAttribute(key, attrs[key]);
  if (text !== undefined) el.textContent = text;
  svg.appendChild(el);
}

function drawTop() {
  const svg = document.getElementById("ruler-top");
  const zero = 733;
  add(svg, "rect", { x: zero, y: 1.5, width: 126, height: 14, fill: "#fff", stroke: "#777" });
  for (let i = -95; i <= 140; i++) {
    const x = Math.round(zero + i * STEP / 10);
    if (x < 16) continue;
    if (i % 10 === 0) {
      add(svg, "rect", { x, y: 11, width: 1, height: 5, fill: "#777" });
      if (i !== 0 && i < 140) add(svg, "text", { x, y: 10 }, Math.abs(i) * 5);
    } else if (Math.abs(i % 10) > 1 && Math.abs(i % 10) < 9) {
      const tall = i % 5 === 0;
      add(svg, "rect", { x, y: tall ? 7 : 8, width: 1, height: tall ? 3 : 1, fill: "#888" });
    }
  }
  for (let x = 753; x < 860; x += 19) add(svg, "path", { d: `M${x} 8v5h4`, fill: "none", stroke: "#000", "stroke-width": 2 });
  add(svg, "path", { d: "M8 6v4h5", fill: "none", stroke: "#000", "stroke-width": 2 });
  add(svg, "path", { d: "M729.5 1.500h8v2l-3 4 3 4v4h-8v-4l3-4-3-4zM729.500 13.500h8", fill: "#fff", stroke: "#000" });
  add(svg, "path", { d: "M855 14.500v-3l4-4 4 4v3z", fill: "#fff", stroke: "#000" });
}

function drawLeft() {
  const svg = document.getElementById("ruler-left");
  const zero = 291;
  add(svg, "rect", { x: 1.5, y: zero + 0.5, width: 14, height: 89, fill: "#fff", stroke: "#777" });
  for (let i = -36; i <= 67; i++) {
    const y = Math.round(zero + i * STEP / 10);
    if (i % 10 === 0) {
      add(svg, "rect", { x: 11, y, width: 5, height: 1, fill: "#777" });
      add(svg, "text", { x: 0, y: 0, transform: `translate(11 ${y - 1}) rotate(-90)` }, Math.abs(i) * 5);
    } else {
      const tall = i % 5 === 0;
      add(svg, "rect", { x: tall ? 13 : 15, y, width: tall ? 3 : 1, height: 1, fill: "#888" });
    }
  }
}

const COLORS = "f5abaf 86715f d0cce6 a79bcd 6f8bcd 7766b0 8f82a8 4a6398 5a4f6b 7187a2 0088d8 9fd8f7 b4cad8 93a8b0 6e7d85 48505a 527370 3f8d74 6a968e 55a892 55a568 58c3cc 48a8b5 b5ccb8 d3ecd8 a2d5ab 93a399 98a37d b9c56d b9cc93 a9cf06 d8e57b 55554a 85857a b0b0a2 b5b077 dfd36b fff277 fff9a5 fffdd5 ae9370 d1925c d8b460 f08235 f6ac33 f5ad6b".split(" ");

function drawSwatches() {
  const box = document.getElementById("swatches");
  COLORS.forEach(color => {
    const b = document.createElement("button");
    b.className = "swatch";
    b.style.background = "#" + color;
    b.setAttribute("aria-label", "#" + color);
    box.appendChild(b);
  });
}

drawTop();
drawLeft();
drawSwatches();
```
